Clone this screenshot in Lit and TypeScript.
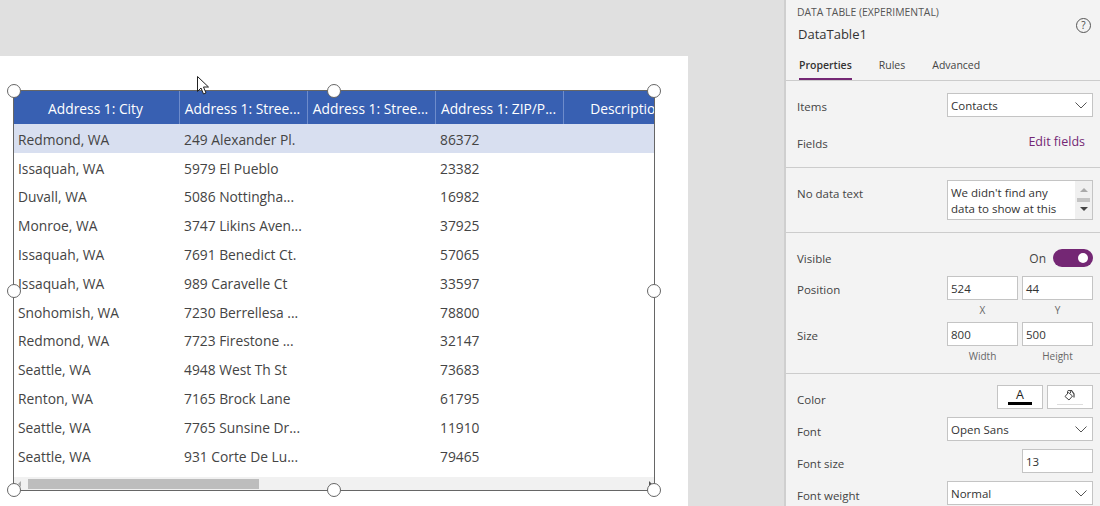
import { LitElement, html, css, svg } from 'lit';
import { customElement } from 'lit/decorators.js';

const columns = [
  { label: 'Address 1: City', width: 166 },
  { label: 'Address 1: Stree...', width: 128 },
  { label: 'Address 1: Stree...', width: 128 },
  { label: 'Address 1: ZIP/P...', width: 128 },
  { label: 'Description', width: 128 },
];

const rows = [
  ['Redmond, WA', '249 Alexander Pl.', '86372'],
  ['Issaquah, WA', '5979 El Pueblo', '23382'],
  ['Duvall, WA', '5086 Nottingha...', '16982'],
  ['Monroe, WA', '3747 Likins Aven...', '37925'],
  ['Issaquah, WA', '7691 Benedict Ct.', '57065'],
  ['Issaquah, WA', '989 Caravelle Ct', '33597'],
  ['Snohomish, WA', '7230 Berrellesa ...', '78800'],
  ['Redmond, WA', '7723 Firestone ...', '32147'],
  ['Seattle, WA', '4948 West Th St', '73683'],
  ['Renton, WA', '7165 Brock Lane', '61795'],
  ['Seattle, WA', '7765 Sunsine Dr...', '11910'],
  ['Seattle, WA', '931 Corte De Lu...', '79465'],
];

const gridCols = columns.map((c) => `${c.width}px`).join(' ');

// selection handles, as % of the table box
const handles = [
  [0, 0], [50, 0], [100, 0],
  [0, 50], [100, 50],
  [0, 100], [50, 100], [100, 100],
];

const chevron = svg`<path d="M.5 .5l5.500 5.500 5.500-5.500" fill="none" stroke="#555" stroke-width="1"/>`;

@customElement('app-root')
export class AppRoot extends LitElement {
  static styles = css`
    * {
      box-sizing: border-box;
    }

    :host {
      display: flex;
      width: 1100px;
      height: 506px;
      overflow: hidden;
      font-family: 'Open Sans', sans-serif;
      color: #444;
      background: #e0e0e0;
    }

    .stage {
      flex: 0 0 784px;
      padding-top: 56px;
    }

    .canvas {
      width: 688px;
      height: 450px;
      background: #fff;
      padding: 34px 0 0 13px;
    }

    .frame {
      position: relative;
      width: 642px;
      height: 401px;
      border: 1px solid #666;
    }

    .table {
      width: 100%;
      height: 100%;
      overflow: hidden;
      display: flex;
      flex-direction: column;
    }

    .head {
      display: grid;
      flex: 0 0 33px;
      background: #3860b2;
      color: #fff;
      font-size: 13.8px;
    }

    .head div {
      display: flex;
      align-items: center;
      justify-content: center;
      padding: 1px 2px 0 0;
      white-space: nowrap;
      overflow: hidden;
      border-right: 1px solid #6e8ccb;
    }

    .head div:last-child {
      border-right: none;
    }

    .row {
      display: grid;
      flex: 0 0 28.8px;
      font-size: 13.8px;
      align-items: center;
      white-space: nowrap;
    }

    .row.selected {
      background: #d8dff0;
    }

    .row div {
      padding: 2px 0 0 4px;
    }

    .scroll {
      margin-top: auto;
      flex: 0 0 13px;
      background: #f1f1f1;
      display: flex;
      align-items: center;
      justify-content: space-between;
      padding: 0 2px 0 4px;
      position: relative;
    }

    .arrow {
      width: 0;
      height: 0;
      border-top: 3px solid transparent;
      border-bottom: 3px solid transparent;
    }

    .arrow.left {
      border-right: 3px solid #aaa;
    }

    .arrow.right {
      border-left: 3px solid #555;
    }

    .thumb {
      position: absolute;
      left: 14px;
      top: 2px;
      width: 231px;
      height: 10px;
      background: #bdbdbd;
    }

    .handle {
      position: absolute;
      width: 14px;
      height: 14px;
      margin: -7px 0 0 -7px;
      border-radius: 50%;
      background: #fff;
      border: 1px solid #666;
    }

    .cursor {
      position: absolute;
      left: 183px;
      top: -15px;
    }

    .panel {
      flex: 1;
      height: 506px;
      overflow: hidden;
      background: #f3f3f3;
      border-left: 2px solid #cfcfcf;
      font-size: 12px;
    }

    .top {
      position: relative;
      padding: 5px 0 0 11px;
      height: 53px;
    }

    .kind {
      font-size: 10.4px;
      line-height: 14px;
      color: #555;
    }

    .name {
      font-size: 13px;
      line-height: 18px;
      margin: 6px 0 0 1px;
      color: #333;
    }

    .help {
      position: absolute;
      right: 9px;
      top: 18px;
      width: 15px;
      height: 15px;
      border: 1px solid #555;
      border-radius: 50%;
      font-size: 10px;
      line-height: 13px;
      text-align: center;
    }

    .tabs {
      display: flex;
      gap: 27px;
      height: 28px;
      padding-left: 13px;
      border-bottom: 1px solid #ccc;
      font-size: 10.5px;
    }

    .tab {
      height: 27px;
      line-height: 24px;
    }

    .tab.active {
      font-weight: 600;
      color: #333;
      border-bottom: 2px solid #742774;
    }

    .section {
      padding: 0 7px 0 11px;
      border-bottom: 1px solid #ccc;
    }

    .field {
      display: flex;
      align-items: center;
      justify-content: space-between;
    }

    .label {
      font-size: 11.5px;
      color: #444;
      padding-top: 3px;
    }

    .lower .label {
      padding-top: 4px;
    }

    .box {
      background: #fff;
      border: 1px solid #c4c4c4;
      height: 24px;
      font-size: 11.5px;
      color: #333;
      display: flex;
      align-items: center;
      justify-content: space-between;
      padding: 1px 5px 0 3px;
    }

    .select {
      width: 146px;
    }

    .num {
      width: 71px;
    }

    .pair {
      display: flex;
      gap: 4px;
    }

    .link {
      color: #742774;
      font-size: 12.5px;
      padding: 0 8px 4px 0;
    }

    .note {
      display: block;
      width: 146px;
      height: 40px;
      background: #fff;
      border: 1px solid #c4c4c4;
      font-size: 11.5px;
      line-height: 16px;
      padding: 4px 0 0 3px;
      color: #333;
      position: relative;
      white-space: nowrap;
      overflow: hidden;
    }

    .note .bar {
      position: absolute;
      right: 0;
      top: 0;
      bottom: 0;
      width: 17px;
      background: #f0f0f0;
      display: flex;
      flex-direction: column;
      align-items: center;
      justify-content: space-between;
      padding: 7px 0 8px;
    }

    .tri {
      width: 0;
      height: 0;
      border-left: 4px solid transparent;
      border-right: 4px solid transparent;
    }

    .tri.up {
      border-bottom: 4px solid #aaa;
    }

    .tri.down {
      border-top: 4px solid #444;
    }

    .bar i {
      display: block;
      width: 13px;
      height: 4px;
      background: #c4c4c4;
    }

    .on {
      display: flex;
      align-items: center;
      gap: 7px;
      font-size: 12px;
    }

    .toggle {
      width: 40px;
      height: 18px;
      border-radius: 9px;
      background: #742774;
      display: flex;
      align-items: center;
      justify-content: flex-end;
      padding-right: 5px;
    }

    .toggle i {
      width: 10px;
      height: 10px;
      border-radius: 50%;
      background: #fff;
    }

    .caps {
      display: flex;
      gap: 4px;
      justify-content: flex-end;
      font-size: 10px;
      color: #666;
    }

    .caps span {
      width: 71px;
      text-align: center;
    }

    .swatches {
      display: flex;
      gap: 4px;
    }

    .swatch {
      width: 46px;
      height: 24px;
      background: #fff;
      border: 1px solid #c4c4c4;
      display: flex;
      flex-direction: column;
      align-items: center;
      justify-content: flex-end;
      padding-bottom: 3px;
    }

    .letter {
      font-size: 12.5px;
      line-height: 14px;
      color: #222;
    }

    .ink {
      width: 24px;
      height: 3px;
      background: #000;
    }

    .bucket {
      margin-bottom: 2px;
    }

    .fill {
      width: 26px;
      height: 1px;
      background: #ddd;
    }
  `;

  dropdown(value: string) {
    return html`<div class="box select">
      ${value}
      <svg width="12" height="7" viewBox="0 0 12 7">${chevron}</svg>
    </div>`;
  }

  renderStage() {
    return html`
      <div class="stage">
        <div class="canvas">
          <div class="frame">
            <div class="table">
              <div class="head" style="grid-template-columns:${gridCols}">
                ${columns.map((c) => html`<div>${c.label}</div>`)}
              </div>
              ${rows.map(
                (r, i) => html`
                  <div class="row ${i === 0 ? 'selected' : ''}" style="grid-template-columns:${gridCols}">
                    <div>${r[0]}</div>
                    <div>${r[1]}</div>
                    <div></div>
                    <div>${r[2]}</div>
                    <div></div>
                  </div>
                `
              )}
              <div class="scroll">
                <span class="arrow left"></span>
                <span class="thumb"></span>
                <span class="arrow right"></span>
              </div>
            </div>
            ${handles.map(
              ([x, y]) => html`<span class="handle" style="left:${x}%;top:${y}%"></span>`
            )}
            <svg class="cursor" width="13" height="20" viewBox="0 0 13 20">
              <path d="M.5 .5v15l3.500-3.500 2.500 6 2.500-1-2.500-6h5z" fill="#fff" stroke="#222" stroke-width="1"/>
            </svg>
          </div>
        </div>
      </div>
    `;
  }

  renderPanel() {
    return html`
      <div class="panel">
        <div class="top">
          <div class="kind">DATA TABLE (EXPERIMENTAL)</div>
          <div class="name">DataTable1</div>
          <div class="help">?</div>
        </div>
        <div class="tabs">
          <div class="tab active">Properties</div>
          <div class="tab">Rules</div>
          <div class="tab">Advanced</div>
        </div>

        <div class="section" style="height:87px;padding-top:12px">
          <div class="field" style="height:24px">
            <span class="label">Items</span>
            ${this.dropdown('Contacts')}
          </div>
          <div class="field" style="height:24px;margin-top:14px">
            <span class="label" style="padding-top:0">Fields</span>
            <span class="link">Edit fields</span>
          </div>
        </div>

        <div class="section" style="height:65px;padding-top:12px">
          <div class="field" style="align-items:flex-start">
            <span class="label" style="padding-top:6px">No data text</span>
            <div class="note">
              We didn't find any<br />data to show at this
              <div class="bar">
                <span class="tri up"></span>
                <i></i>
                <span class="tri down"></span>
              </div>
            </div>
          </div>
        </div>

        <div class="section" style="height:141px;padding-top:15px">
          <div class="field" style="height:20px">
            <span class="label" style="padding-top:0">Visible</span>
            <div class="on">On <span class="toggle"><i></i></span></div>
          </div>
          <div class="field" style="margin-top:8px">
            <span class="label">Position</span>
            <div class="pair">
              <div class="box num">524</div>
              <div class="box num">44</div>
            </div>
          </div>
          <div class="caps" style="margin-top:3px;height:19px"><span>X</span><span>Y</span></div>
          <div class="field">
            <span class="label">Size</span>
            <div class="pair">
              <div class="box num">800</div>
              <div class="box num">500</div>
            </div>
          </div>
          <div class="caps" style="margin-top:3px"><span>Width</span><span>Height</span></div>
        </div>

        <div class="section lower" style="border-bottom:none;padding-top:11px">
          <div class="field">
            <span class="label">Color</span>
            <div class="swatches">
              <div class="swatch">
                <span class="letter">A</span>
                <span class="ink"></span>
              </div>
              <div class="swatch">
                <svg class="bucket" width="12" height="12" viewBox="0 0 12 12">
                  <path d="M4.500 2.500l4 3.500-3.500 4-4-3.500z" fill="#fff" stroke="#444" stroke-width="1"/>
                  <path d="M3.500 4V1.500a1.500 1 0 0 1 3 0V3" fill="none" stroke="#444" stroke-width="1"/>
                  <path d="M6 .5h1.500L10 4v3.500" fill="none" stroke="#444" stroke-width="1.200"/>
                </svg>
                <span class="fill"></span>
              </div>
            </div>
          </div>
          <div class="field" style="margin-top:8px">
            <span class="label">Font</span>
            ${this.dropdown('Open Sans')}
          </div>
          <div class="field" style="margin-top:8px">
            <span class="label">Font size</span>
            <div class="box num">13</div>
          </div>
          <div class="field" style="margin-top:8px">
            <span class="label">Font weight</span>
            ${this.dropdown('Normal')}
          </div>
        </div>
      </div>
    `;
  }

  render() {
    return html`${this.renderStage()}${this.renderPanel()}`;
  }
}
